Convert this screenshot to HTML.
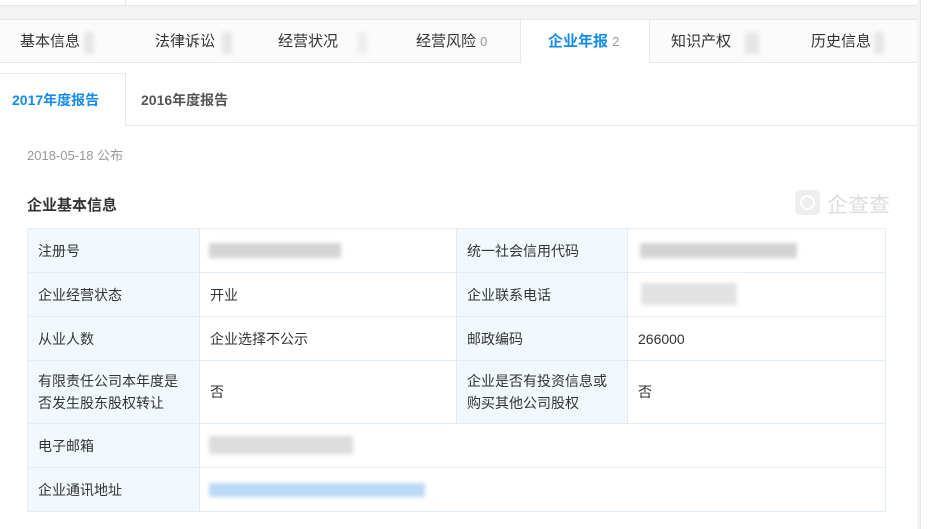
<!DOCTYPE html>
<html><head><meta charset="utf-8"><style>
*{margin:0;padding:0;box-sizing:border-box}
body{width:936px;height:529px;background:#f3f3f3;font-family:"Liberation Sans","Noto Sans CJK SC",sans-serif;position:relative;overflow:hidden;color:#333}
.abs{position:absolute}
.tab{position:absolute;top:20px;height:43px;line-height:43px;font-size:15px;color:#333}
.blur{position:absolute;filter:blur(2px)}
table{position:absolute;left:27px;top:228px;width:858px;border-collapse:collapse;font-size:14px;table-layout:fixed}
td{border:1px solid #e3edf5;padding:0 10px;color:#333;overflow:hidden}
td.l{background:#f2f9fc}
</style></head><body>
<div class="abs" style="left:0;top:0;width:917px;height:6px;background:#fff;border-bottom:1px solid #e6e6e6"></div>
<div class="abs" style="left:125px;top:0;width:1px;height:6px;background:#e6e6e6"></div>
<div class="abs" style="left:0;top:19px;width:917px;height:510px;background:#fff"></div>
<div class="abs" style="left:0;top:19px;width:917px;height:44px;background:#fbfbfb;border-top:1px solid #e8e8e8;border-bottom:1px solid #e8e8e8"></div>
<div class="abs" style="left:920px;top:0;width:16px;height:529px;background:#fff;border-left:1px solid #e6e6e6"></div>
<div class="abs" style="left:917px;top:0;width:3px;height:529px;background:#f3f3f3"></div>
<div class="abs" style="left:520px;top:20px;width:130px;height:43px;background:#fff;border-left:1px solid #e8e8e8;border-right:1px solid #e8e8e8"></div>
<div class="tab" style="left:20px">基本信息</div>
<div class="tab" style="left:155px">法律诉讼</div>
<div class="tab" style="left:278px">经营状况</div>
<div class="tab" style="left:416px">经营风险 <span style="color:#999;font-size:13px">0</span></div>
<div class="tab" style="left:548px;color:#128bed;font-weight:bold">企业年报 <span style="color:#999;font-size:13px;font-weight:normal">2</span></div>
<div class="tab" style="left:671px">知识产权</div>
<div class="tab" style="left:811px">历史信息</div>
<div class="blur" style="left:84px;top:32px;width:10px;height:22px;background:#e6e6e6"></div>
<div class="blur" style="left:222px;top:32px;width:10px;height:22px;background:#e6e6e6"></div>
<div class="blur" style="left:357px;top:32px;width:10px;height:22px;background:#eee"></div>
<div class="blur" style="left:745px;top:32px;width:14px;height:22px;background:#e6e6e6"></div>
<div class="blur" style="left:874px;top:32px;width:10px;height:22px;background:#e6e6e6"></div>
<div class="abs" style="left:0;top:125px;width:917px;height:1px;background:#e8e8e8"></div>
<div class="abs" style="left:0;top:73px;width:126px;height:53px;background:#fff;border:1px solid #e8e8e8;border-bottom:none;border-left:none"></div>
<div class="abs" style="left:12px;top:90px;font-size:14px;font-weight:bold;color:#128bed">2017年度报告</div>
<div class="abs" style="left:141px;top:90px;font-size:14px;font-weight:bold;color:#555">2016年度报告</div>
<div class="abs" style="left:27px;top:145px;font-size:13px;color:#999">2018-05-18 公布</div>
<div class="abs" style="left:27px;top:194px;font-size:15px;font-weight:bold;color:#333">企业基本信息</div>
<div class="abs" style="left:795px;top:190px;width:25px;height:25px;background:#eee;border-radius:5px"></div>
<div class="abs" style="left:800px;top:195px;width:15px;height:15px;border:2px solid #fff;border-radius:50%"></div>
<div class="abs" style="left:827px;top:189px;font-size:21px;color:#ddd">企查查</div>
<table>
<colgroup><col style="width:172px"><col style="width:257px"><col style="width:171px"><col style="width:258px"></colgroup>
<tr style="height:44px"><td class="l">注册号</td><td></td><td class="l">统一社会信用代码</td><td></td></tr>
<tr style="height:44px"><td class="l">企业经营状态</td><td>开业</td><td class="l">企业联系电话</td><td></td></tr>
<tr style="height:44px"><td class="l">从业人数</td><td>企业选择不公示</td><td class="l">邮政编码</td><td>266000</td></tr>
<tr style="height:63px"><td class="l" style="line-height:22px">有限责任公司本年度是否发生股东股权转让</td><td>否</td><td class="l" style="line-height:22px">企业是否有投资信息或购买其他公司股权</td><td>否</td></tr>
<tr style="height:44px"><td class="l">电子邮箱</td><td colspan="3"></td></tr>
<tr style="height:44px"><td class="l">企业通讯地址</td><td colspan="3"></td></tr>
</table>
<div class="blur" style="left:209px;top:243px;width:132px;height:15px;background:#d4d4d4"></div>
<div class="blur" style="left:640px;top:243px;width:157px;height:15px;background:#d3d3d3"></div>
<div class="blur" style="left:641px;top:283px;width:96px;height:22px;background:#e2e2e2"></div>
<div class="blur" style="left:209px;top:436px;width:144px;height:18px;background:#dcdcdc"></div>
<div class="blur" style="left:209px;top:483px;width:216px;height:14px;background:#bcd9f5"></div>
</body></html>
